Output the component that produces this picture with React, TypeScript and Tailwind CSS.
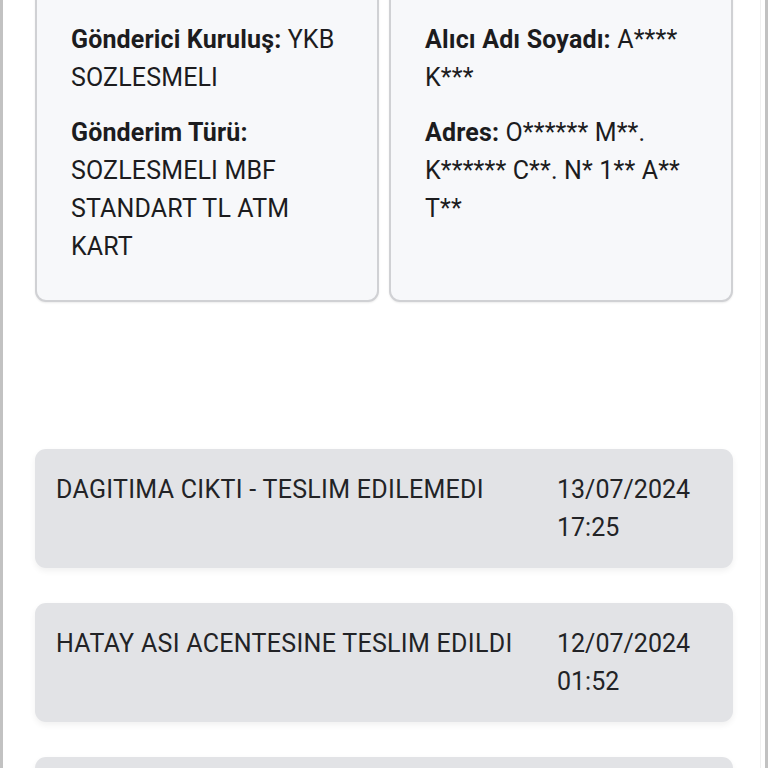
import React from "react";

const font = { fontFamily: "Roboto, 'Noto Sans', sans-serif" };

function InfoCard({ items }: { items: { label: string; value: string }[] }) {
  return (
    <div className="flex-1 rounded-[11px] border-2 border-[#d0d1d4] bg-[#f7f8fa] px-[34px] pt-[34px] pb-[34px] shadow-[0_1px_2px_rgba(0,0,0,0.08)]">
      <div className="flex flex-col gap-[17px]">
        {items.map((it) => (
          <p key={it.label} className="text-[25px] leading-[38px] tracking-[0.15px] text-[#1c1c1e]">
            <span className="font-bold">{it.label}</span> {it.value}
          </p>
        ))}
      </div>
    </div>
  );
}

function EventCard({ title, date, time }: { title: string; date: string; time: string }) {
  return (
    <div className="flex rounded-[11px] bg-[#e2e3e6] pl-[21px] pr-[21px] pt-[22px] pb-[21px] shadow-[0_3px_6px_rgba(0,0,0,0.06)]">
      <div className="flex-1 text-[25px] leading-[38px] tracking-[0.3px] text-[#222326]">{title}</div>
      <div className="w-[155px] text-[25px] leading-[38px] text-[#222326]">
        {date}
        <br />
        {time}
      </div>
    </div>
  );
}

export default function App() {
  return (
    <div className="relative h-[768px] w-[768px] overflow-hidden bg-white" style={font}>
      <div className="absolute left-0 top-0 h-full w-[3px] bg-[#c2c2c2]" />
      <div className="absolute right-0 top-0 h-full w-[3px] bg-[#c2c2c2]" />
      <div className="absolute right-[7px] top-0 h-full w-px bg-[#f0f0f0]" />
      <div className="mt-[-15px] px-[35px]">
        <div className="flex gap-[10px]">
          <InfoCard
            items={[
              { label: "Gönderici Kuruluş:", value: "YKB SOZLESMELI" },
              { label: "Gönderim Türü:", value: "SOZLESMELI MBF STANDART TL ATM KART" },
            ]}
          />
          <InfoCard
            items={[
              { label: "Alıcı Adı Soyadı:", value: "A**** K***" },
              { label: "Adres:", value: "O****** M**. K****** C**. N* 1** A** T**" },
            ]}
          />
        </div>
        <div className="mt-[147px] flex flex-col gap-[35px]">
          <EventCard title="DAGITIMA CIKTI - TESLIM EDILEMEDI" date="13/07/2024" time="17:25" />
          <EventCard title="HATAY ASI ACENTESINE TESLIM EDILDI" date="12/07/2024" time="01:52" />
          <div className="h-[118px] rounded-[11px] bg-[#e2e3e6] shadow-[0_3px_6px_rgba(0,0,0,0.06)]" />
        </div>
      </div>
    </div>
  );
}
